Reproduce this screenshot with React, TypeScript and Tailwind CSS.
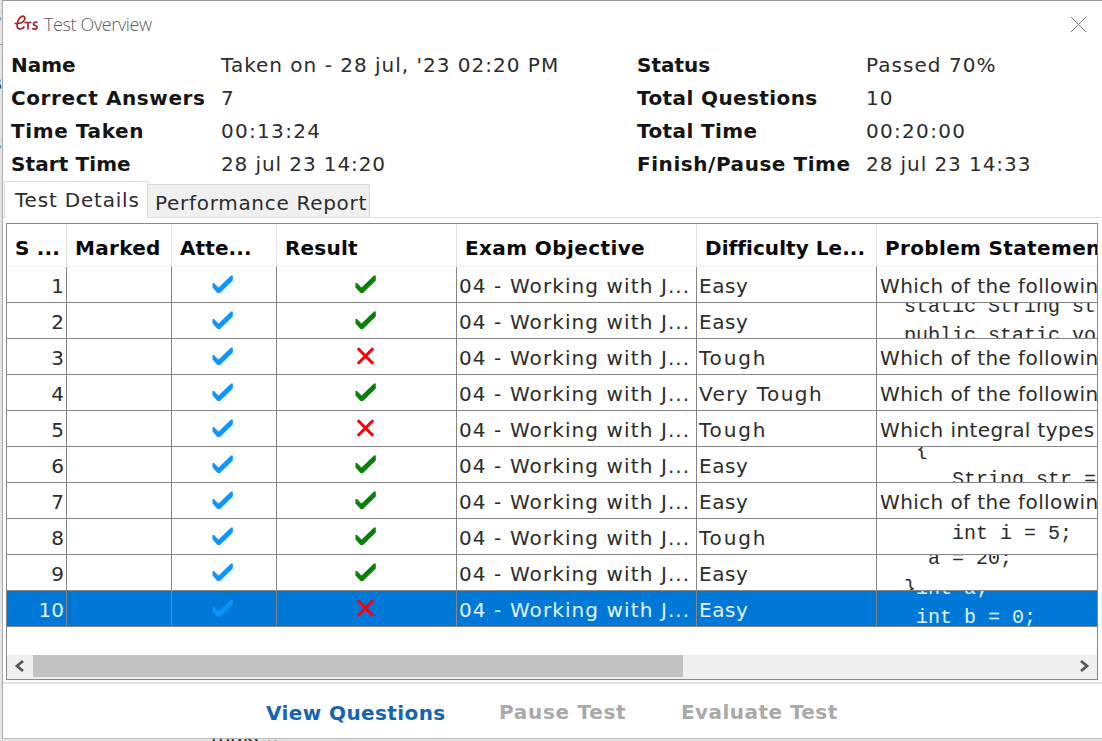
import React from 'react';

const rows: { level: string; ok: boolean; stmt?: string; code?: [string, string][] }[] = [
  { level: 'Easy', ok: true, stmt: 'Which of the following' },
  { level: 'Easy', ok: true, code: [['static String st', 'left-[27px] top-[-8px]'], ['public static vo', 'left-[27px] top-[21px]']] },
  { level: 'Tough', ok: false, stmt: 'Which of the following' },
  { level: 'Very Tough', ok: true, stmt: 'Which of the following' },
  { level: 'Tough', ok: false, stmt: 'Which integral types' },
  { level: 'Easy', ok: true, code: [['{', 'left-[39px] top-[-9px]'], ['String str =', 'left-[75px] top-[21px]']] },
  { level: 'Easy', ok: true, stmt: 'Which of the following' },
  { level: 'Tough', ok: true, code: [['int i = 5;', 'left-[75px] top-[3px]']] },
  { level: 'Easy', ok: true, code: [['a = 20;', 'left-[51px] top-[-8px]'], ['}', 'left-[27px] top-[22px]']] },
  { level: 'Easy', ok: false, code: [['int a;', 'left-[39px] top-[-14px]'], ['int b = 0;', 'left-[39px] top-[15px]']] },
];

const cols = 'grid grid-cols-[60px_105px_105px_180px_240px_180px_220px]';

const headings: [string, string][] = [
  ['S ...', 'tracking-[0.2px]'],
  ['Marked', 'tracking-[0.3px]'],
  ['Atte...', 'tracking-[0.1px]'],
  ['Result', 'tracking-[0.2px]'],
  ['Exam Objective', 'tracking-[0.4px]'],
  ['Difficulty Le...', 'tracking-[0.05px]'],
  ['Problem Statement', 'tracking-[0.35px]'],
];

function Check({ className }: { className: string }) {
  return (
    <svg className={className} width="22" height="20" viewBox="0 0 22 20" fill="currentColor">
      <path d="M0.500 8 L2 8 L6.500 12.500 L19 0.500 L20.800 0.500 L20.800 5.500 L8 18 L5.500 18 L0.500 12.500 Z" />
    </svg>
  );
}

function Cross() {
  return (
    <svg className="mt-[8px] ml-[80px] block text-[#fb0007]" width="17" height="18" viewBox="0 0 17 18" stroke="currentColor" strokeWidth="3" fill="none">
      <path d="M0.800 1.200 L16.200 16.800 M16.200 1.200 L0.800 16.800" />
    </svg>
  );
}

function Info({ items, layout }: { items: [string, string, string, string][]; layout: string }) {
  return (
    <dl className={'grid auto-rows-[33px] leading-[33px] ' + layout}>
      {items.map(([k, v, ks, vs]) => (
        <React.Fragment key={k}>
          <dt className={'font-bold text-[#151515] ' + ks}>{k}</dt>
          <dd className={vs}>{v}</dd>
        </React.Fragment>
      ))}
    </dl>
  );
}

export default function App() {
  return (
    <div className="relative h-[741px] w-[1102px] overflow-hidden bg-[#e4e4e4] pl-[2px] font-['DejaVu_Sans',sans-serif] text-[20px] whitespace-nowrap text-[#2c2c2c]">
      <span className="absolute top-[0px] left-[-9px] text-[20px]">s</span>
      <span className="absolute top-[68px] left-[-10px] font-bold">s</span>
      <span className="absolute top-[128px] left-[-9px] text-[20px]">s</span>
      <div className="absolute top-[44px] left-0 h-px w-[2px] bg-[#999]" />
      <div className="absolute top-[725px] left-[211px] text-[20px] leading-[22px]">make..</div>
      <div className="relative flex h-[739px] w-[1100px] flex-col border-t border-b border-l border-t-[#999] border-b-[#bbb] border-l-[#aaa] bg-white">
        <header className="flex h-[48px] items-center pl-[11px] pb-px">
          <svg width="25" height="18" viewBox="0 0 25 18" fill="none" stroke="#a3242b" strokeWidth="1.700" className="mt-[-2px]">
            <path d="M0.500 8.500 H4 C8 8.500 12 5 10.500 2 C9 0 5 2 3.800 6.500 C2.500 11 3 14 6 14 C8 14 9.500 13 10.500 11.500 M10.500 7.500 H17.500 M14 7.500 V14.500 M23.500 7.500 C20.500 6.500 18.500 8 20 10 C21.500 11 23.800 11 22.800 13 C22 14.300 20 14.300 18 13.500" />
          </svg>
          <h1 className="ml-[5px] font-['Open_Sans','Noto_Sans',sans-serif] text-[18px] font-light tracking-[-0.38px] text-[#5c5c5c]">Test Overview</h1>
          <svg className="ml-auto mr-[15px]" width="17" height="17" viewBox="0 0 17 17" stroke="#777" strokeWidth="1">
            <path d="M1 1 L16 16 M16 1 L1 16" />
          </svg>
        </header>
        <section className="flex pl-[8px]">
          <Info
            layout="w-[626px] grid-cols-[210px_1fr]"
            items={[
              ['Name', "Taken on - 28 jul, '23 02:20 PM", '', 'tracking-[1px]'],
              ['Correct Answers', '7', 'tracking-[0.6px]', ''],
              ['Time Taken', '00:13:24', 'tracking-[0.6px]', 'tracking-[1.3px]'],
              ['Start Time', '28 jul 23 14:20', 'tracking-[0.1px]', 'tracking-[0.9px]'],
            ]}
          />
          <Info
            layout="grid-cols-[229px_1fr]"
            items={[
              ['Status', 'Passed 70%', '', 'tracking-[1.05px]'],
              ['Total Questions', '10', 'tracking-[0.4px]', 'tracking-[1px]'],
              ['Total Time', '00:20:00', 'tracking-[0.4px]', 'tracking-[1.3px]'],
              ['Finish/Pause Time', '28 jul 23 14:33', 'tracking-[0.55px]', 'tracking-[0.93px]'],
            ]}
          />
        </section>
        <nav className="flex h-[37px] items-end border-b border-[#dcdcdc] pl-[1px]">
          <button className="mb-[-1px] h-[37px] w-[144px] border-t border-r border-l border-[#dcdcdc] bg-white text-left pl-[10px] pb-px tracking-[0.8px]">Test Details</button>
          <button className="h-[33px] w-[222px] border-t border-r border-[#d9d9d9] bg-[#f0f0f0] text-left pl-[7px] pt-[3px] tracking-[0.7px]">Performance Report</button>
        </nav>
        <main className="mt-[5px] ml-[3px] flex h-[457px] w-[1092px] flex-none flex-col overflow-hidden border border-[#828790] bg-white">
          <div className={cols + ' h-[43px] flex-none border-b border-[#eee] font-bold leading-[48px] text-[#080808]'}>
            {headings.map(([h, track]) => (
              <div key={h} className={'border-r border-[#e2e2e2] pl-[8px] last:border-r-0 ' + track}>{h}</div>
            ))}
          </div>
          {rows.map((r, i) => (
            <div key={i} className={cols + ' h-[36px] flex-none leading-[38px] *:h-[36px] *:border-r *:border-b *:border-[#858585] *:last:border-r-0 ' + (i === 9 ? 'bg-[#0078d7] text-[#e0f2ff]' : '')}>
              <div className="pr-[2px] text-right">{i + 1}</div>
              <div />
              <div><Check className={'mt-[8px] ml-[40px] block ' + (i === 9 ? 'text-[#0a93fa]' : 'text-[#0f95fb]')} /></div>
              <div>{r.ok ? <Check className="mt-[8px] ml-[78px] block text-[#08800a]" /> : <Cross />}</div>
              <div className="pl-[2px] tracking-[1.1px]">04 - Working with J...</div>
              <div className={'pl-[2px] ' + (r.level === 'Very Tough' ? 'tracking-[1.4px]' : r.level === 'Tough' ? 'tracking-[1.8px]' : 'tracking-[0.6px]')}>{r.level}</div>
              <div className="relative overflow-hidden pl-[3px] tracking-[0.4px]">
                {r.stmt}
                {r.code?.map(([t, pos]) => (
                  <pre key={t} className={"absolute font-['Liberation_Mono',monospace] text-[20px] leading-[24px] tracking-normal " + pos}>{t}</pre>
                ))}
              </div>
            </div>
          ))}
          <div className="mt-auto flex h-[24px] flex-none items-stretch bg-[#f0f0f0] pb-[2px]">
            <svg width="26" height="22" viewBox="0 0 26 22" fill="none" stroke="#555" strokeWidth="2.800"><path d="M16 6 L10 11 L16 16" /></svg>
            <div className="w-[650px] bg-[#c2c2c2]" />
            <svg className="ml-auto" width="26" height="22" viewBox="0 0 26 22" fill="none" stroke="#555" strokeWidth="2.800"><path d="M10 6 L16 11 L10 16" /></svg>
          </div>
        </main>
        <div className="mt-[2px] h-[2px] flex-none bg-[#e2e2e6]" />
        <footer className="flex items-start pt-[11px] pl-[263px] font-bold leading-[34px] text-[#a9a9a9]">
          <button className="w-[233px] text-left pt-px tracking-[0.4px] text-[#1464b4]">View Questions</button>
          <button className="w-[182px] text-left tracking-[0.7px]">Pause Test</button>
          <button className="tracking-[0.45px]">Evaluate Test</button>
        </footer>
      </div>
    </div>
  );
}
